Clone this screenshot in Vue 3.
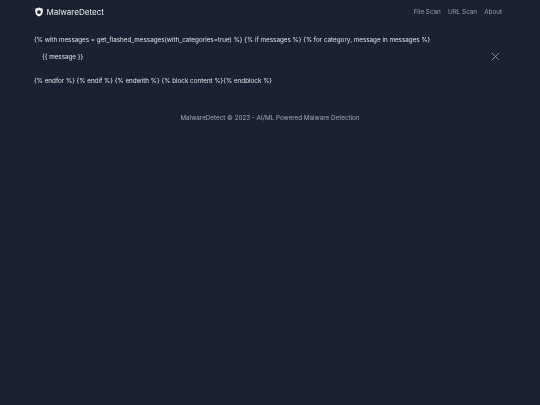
<script setup>
const links = ['File Scan', 'URL Scan', 'About']
</script>

<template>
  <div class="page">
    <nav class="nav">
      <div class="brand">
        <svg class="shield" viewBox="0 0 24 24" width="10" height="10">
          <path fill-rule="evenodd" fill="#f3f4f6" d="M12 1 3 4v7c0 6 3.800 10.200 9 12 5.200-1.800 9-6 9-12V4l-9-3Zm0 6.500a4.500 4.500 0 1 1 0 9 4.500 4.500 0 0 1 0-9Z" />
        </svg>
        <span>MalwareDetect</span>
      </div>
      <div class="links">
        <a v-for="l in links" :key="l">{{ l }}</a>
      </div>
    </nav>
    <main class="main">
      <p class="tpl">{% with messages = get_flashed_messages(with_categories=true) %} {% if messages %} {% for category, message in messages %}</p>
      <div class="alert">
        <span>&#123;&#123; message &#125;&#125;</span>
        <svg viewBox="0 0 10 10" width="9" height="9" class="close">
          <path d="M1 1 9 9M9 1 1 9" stroke="#9ca3af" stroke-width="0.9" fill="none" />
        </svg>
      </div>
      <p class="tpl">{% endfor %} {% endif %} {% endwith %} {% block content %}{% endblock %}</p>
    </main>
    <footer class="footer">MalwareDetect © 2023 - AI/ML Powered Malware Detection</footer>
  </div>
</template>

<style>
html, body { margin: 0; background: #1b2130; }
</style>

<style scoped>
.page {
  width: 540px;
  height: 405px;
  background: #1b2130;
  font-family: Inter, "Noto Sans", sans-serif;
  font-size: 6.300px;
  color: #dfe2e7;
  overflow: hidden;
}
.nav, .main, .footer { will-change: transform; }
.nav {
  height: 24px;
  padding: 0 38px 0 34px;
  display: flex;
  align-items: center;
  justify-content: space-between;
}
.brand {
  display: flex;
  align-items: center;
  gap: 2.500px;
  font-size: 8.050px;
  color: #e9ebef;
}
.shield { display: block; }
.links { display: flex; gap: 7.200px; color: #959caa; font-size: 6.300px; }
.main { padding: 11px 38px 0 34px; }
.tpl { margin: 0; height: 10px; line-height: 10px; white-space: nowrap; }
.alert {
  display: flex;
  align-items: center;
  justify-content: space-between;
  height: 16px;
  margin: 3.500px 0 11px;
  padding: 0 2px 0 8px;
}
.close { display: block; }
.footer {
  margin-top: 27px;
  text-align: center;
  color: #a3a9b5;
  font-size: 6.300px;
  line-height: 10px;
}
</style>
